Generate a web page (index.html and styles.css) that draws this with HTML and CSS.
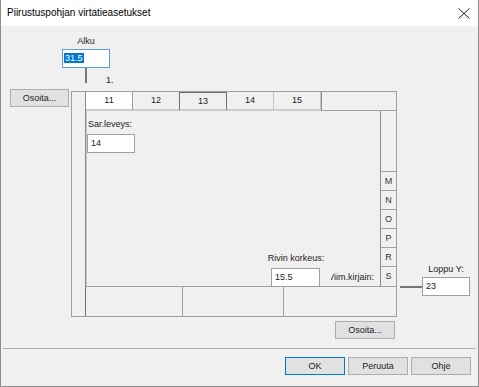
FILE: index.html
```html
<!DOCTYPE html>
<html lang="fi">

<head>
    <meta charset="UTF-8">
    <title>Piirustuspohjan virtatieasetukset</title>
    <link rel="stylesheet" href="styles.css">
</head>

<body>
    <div class="dialog">
        <div class="titlebar">
            <span class="title">Piirustuspohjan virtatieasetukset</span>
            <svg class="close" width="12" height="11" viewBox="0 0 12 11">
                <path d="M0.5 0.5 L11.5 10.5 M11.5 0.5 L0.5 10.5" stroke="#1a1a1a" stroke-width="1" fill="none"/>
            </svg>
        </div>

        <!-- Alku -->
        <div class="start">
            <div class="label center">Alku</div>
            <div class="field focus"><span class="sel">31.5</span></div>
            <div class="connector">
                <div class="vline"></div>
                <span class="label">1.</span>
            </div>
        </div>

        <div class="layout">
            <button class="btn left-btn">Osoita...</button>

            <div class="frame">
                <div class="strip"></div>

                <div class="head">
                    <div class="hcell white">11</div>
                    <div class="hcell">12</div>
                    <div class="hcell pressed">13</div>
                    <div class="hcell">14</div>
                    <div class="hcell">15</div>
                    <div class="hcell blank"></div>
                </div>

                <div class="content">
                    <div class="group">
                        <div class="label">Sar.leveys:</div>
                        <div class="field">14</div>
                    </div>
                    <div class="bottom-fields">
                        <div class="group row-height">
                            <div class="label center">Rivin korkeus:</div>
                            <div class="field">15.5</div>
                        </div>
                        <div class="label clip"><span>Viim.kirjain:</span></div>
                    </div>
                </div>

                <div class="letters">
                    <div class="lcell top"></div>
                    <div class="lcell">M</div>
                    <div class="lcell">N</div>
                    <div class="lcell">O</div>
                    <div class="lcell">P</div>
                    <div class="lcell">R</div>
                    <div class="lcell">S</div>
                </div>

                <div class="foot">
                    <div class="fcell c1"></div>
                    <div class="fcell c2"></div>
                    <div class="fcell"></div>
                </div>
            </div>

            <!-- Loppu Y -->
            <div class="end">
                <div class="label end-label">Loppu Y:</div>
                <div class="end-row">
                    <div class="hline"></div>
                    <div class="field">23</div>
                </div>
            </div>
        </div>

        <div class="point-row">
            <button class="btn">Osoita...</button>
        </div>

        <div class="separator"></div>

        <div class="actions">
            <button class="btn default">OK</button>
            <button class="btn">Peruuta</button>
            <button class="btn">Ohje</button>
        </div>
    </div>
</body>

</html>
```

FILE: styles.css
```css
* {
    box-sizing: border-box;
}

body {
    margin: 0;
    font-family: "Liberation Sans", Arial, sans-serif;
    font-size: 9px;
    color: #222;
    background: #f0f0f0;
}

.dialog {
    width: 479px;
    height: 387px;
    background: #f0f0f0;
    border: 1px solid #8c8c8c;
    border-top: none;
}

.titlebar {
    height: 26px;
    background: #fff;
    display: flex;
    align-items: center;
    justify-content: space-between;
    padding: 0 8px 1px 6px;
}

.title {
    font-size: 10px;
    color: #000;
}

.close {
    margin-top: 2px;
}

.label {
    line-height: 11px;
    white-space: nowrap;
}

.center {
    text-align: center;
}

.field {
    width: 48px;
    height: 19px;
    background: #fff;
    border: 1px solid #a0a0a0;
    padding: 2px 0 0 3px;
    line-height: 12px;
}

.field.focus {
    border-color: #5a9ee0;
    padding-left: 1px;
}

.sel {
    background: #0078d7;
    color: #fff;
    padding: 0 1px;
}

/* Alku */
.start {
    margin: 10px 0 0 61px;
    width: 48px;
}

.start .field {
    margin-top: 2px;
}

.connector {
    height: 15px;
    display: flex;
    align-items: flex-end;
}

.vline {
    flex: none;
    width: 2px;
    height: 15px;
    margin-left: 23px;
    background: #777;
}

.connector .label {
    margin: 0 0 -3px 19px;
}

/* main area */
.layout {
    display: flex;
    align-items: flex-start;
    margin-top: 6px;
}

.btn {
    width: 60px;
    height: 18px;
    padding: 0;
    font-family: inherit;
    font-size: 9px;
    color: #222;
    background: #e1e1e1;
    border: 1px solid #adadad;
}

.left-btn {
    width: 59px;
    margin-left: 9px;
}

.frame {
    width: 326px;
    height: 226px;
    margin: 2px 0 0 2px;
    border: 1px solid #a0a0a0;
    display: grid;
    grid-template-columns: 14px 1fr 16px;
    grid-template-rows: 19px 1fr 30px;
}

.strip {
    grid-row: 1 / 4;
    border-right: 1px solid #8a8a8a;
}

.head {
    grid-column: 2 / 4;
    display: flex;
}

.hcell {
    width: 47px;
    text-align: center;
    line-height: 17px;
    border-right: 1px solid #c4c4c4;
    border-bottom: 2px solid #cdcdcd;
}

.hcell.white {
    background: #fff;
    border-right-color: #a0a0a0;
}

.hcell.pressed {
    border: 1px solid #6e6e6e;
    border-bottom-width: 2px;
    border-bottom-color: #cdcdcd;
    margin-left: -1px;
    width: 48px;
}

.hcell.blank {
    flex: 1;
    border-right: none;
    border-left: 1px solid #8a8a8a;
    border-bottom: 1px solid #a0a0a0;
}

.content {
    display: flex;
    flex-direction: column;
    justify-content: space-between;
    padding: 8px 0 0 0;
    border-left: 1px solid #c8c8c8;
}

.content .label {
    padding-left: 1px;
}

.content .group .field {
    margin-top: 4px;
}

.bottom-fields {
    display: flex;
    align-items: flex-end;
    justify-content: flex-end;
    gap: 8px;
    padding-right: 6px;
    margin-bottom: -1px;
}

.row-height {
    width: 55px;
    display: flex;
    flex-direction: column;
    align-items: center;
}

.row-height .field {
    width: 49px;
    margin-top: 4px;
}

.clip {
    width: 43px;
    overflow: hidden;
    display: flex;
    justify-content: flex-end;
    margin-bottom: 4px;
}

.letters {
    display: flex;
    flex-direction: column;
    border-left: 1px solid #8a8a8a;
}

.lcell {
    height: 19px;
    border-bottom: 1px solid #a0a0a0;
    text-align: center;
    line-height: 18px;
    color: #333;
}

.lcell.top {
    flex: 1;
    height: auto;
}

.lcell:last-child {
    border-bottom: none;
}

.foot {
    grid-column: 2 / 4;
    display: flex;
    border-top: 1px solid #a0a0a0;
    border-left: 1px solid #6e6e6e;
    margin-left: -1px;
}

.fcell {
    flex: 1;
}

.fcell.c1 {
    flex: none;
    width: 97px;
    border-right: 1px solid #a0a0a0;
}

.fcell.c2 {
    flex: none;
    width: 101px;
    border-right: 1px solid #a0a0a0;
}

/* Loppu Y */
.end {
    width: 73px;
    margin: 175px 0 0 0;
}

.end-label {
    padding-left: 25px;
    text-align: center;
}

.end-row {
    display: flex;
    align-items: center;
    margin-top: 2px;
}

.hline {
    flex: none;
    width: 22px;
    height: 2px;
    margin-left: 3px;
    background: #777;
}

/* buttons */
.point-row {
    display: flex;
    justify-content: flex-end;
    padding-right: 83px;
    margin-top: 4px;
}

.separator {
    height: 1px;
    margin: 9px 2px 0 2px;
    background: #b0b0b0;
}

.actions {
    display: flex;
    justify-content: flex-end;
    gap: 3px;
    padding-right: 7px;
    margin-top: 8px;
}

.btn.default {
    border-color: #0078d7;
}
```
